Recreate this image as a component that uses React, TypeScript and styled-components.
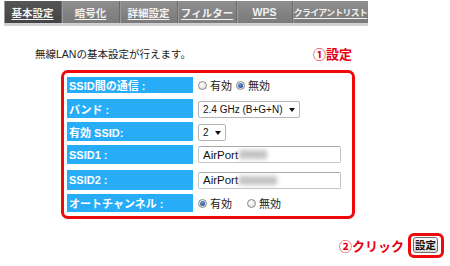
import React from "react";
import styled, { createGlobalStyle } from "styled-components";

const Global = createGlobalStyle`
  html, body { margin: 0; padding: 0; background: #fff; }
  body { font-family: "Liberation Sans", "Noto Sans CJK JP", sans-serif; }
`;

const Page = styled.div`
  width: 450px;
  height: 266px;
  overflow: hidden;
  background: #fff;
`;

const TabBar = styled.div`
  margin: 1px 0 0 4px;
  width: 364px;
  height: 22px;
  display: flex;
  border-bottom: 3px solid #d2d2d2;
  background: linear-gradient(#8e8e8e, #7a7a7a);
`;

const Tab = styled.div<{ $w: number; $active?: boolean; $fs?: number }>`
  width: ${(p) => p.$w}px;
  display: flex;
  align-items: center;
  justify-content: center;
  box-sizing: border-box;
  background: ${(p) => (p.$active ? "linear-gradient(#555, #444)" : "transparent")};
  border-right: 1px solid #6a6a6a;
  box-shadow: inset 1px 0 0 #9a9a9a;
  color: #f2f2f2;
  font-size: ${(p) => p.$fs ?? 10.5}px;
  letter-spacing: ${(p) => (p.$fs ? "-0.6px" : "0")};
  font-weight: bold;
  text-decoration: underline;
  text-underline-offset: 2px;
  white-space: nowrap;
  overflow: hidden;
  &:last-child { border-right: none; }
`;

const HeaderRow = styled.div`
  margin-top: 19px;
  height: 16px;
  display: flex;
  align-items: center;
  justify-content: space-between;
  padding: 0 98px 0 35px;
`;

const Intro = styled.div`
  font-size: 10.5px;
  color: #222;
`;

const RedNote = styled.div`
  font-size: 13px;
  font-weight: bold;
  color: #e60012;
  white-space: nowrap;
`;

const RedBox = styled.div`
  margin: 9px 0 0 61px;
  width: 294px;
  height: 149px;
  box-sizing: border-box;
  border: 3px solid #ee0a0a;
  border-radius: 7px;
  padding: 4px 0 0 3px;
`;

const Row = styled.div<{ $h: number; $gap: number }>`
  display: grid;
  grid-template-columns: 126px 1fr;
  column-gap: 5px;
  height: ${(p) => p.$h}px;
  margin-bottom: ${(p) => p.$gap}px;
  align-items: center;
`;

const Label = styled.div`
  height: 100%;
  background: #27acf7;
  color: #fff;
  font-size: 11px;
  font-weight: bold;
  display: flex;
  align-items: center;
  padding-left: 2px;
  white-space: nowrap;
`;

const Value = styled.div`
  display: flex;
  align-items: center;
  font-size: 11px;
  color: #222;
  white-space: nowrap;
`;

const Radio = styled.span<{ $checked?: boolean }>`
  position: relative;
  display: inline-block;
  flex: none;
  width: 9px;
  height: 9px;
  box-sizing: border-box;
  border-radius: 50%;
  border: 1px solid #8a8a8a;
  background: radial-gradient(circle at 40% 35%, #ffffff, #d6d6d6);
  margin-right: 3px;
  &::after {
    content: "";
    display: ${(p) => (p.$checked ? "block" : "none")};
    position: absolute;
    inset: 1px;
    border-radius: 50%;
    background: radial-gradient(circle at 40% 35%, #6f9be0, #12357a);
  }
`;

const RadioLabel = styled.span<{ $gap: number }>`
  margin-right: ${(p) => p.$gap}px;
`;

const Select = styled.div<{ $w: number }>`
  width: ${(p) => p.$w}px;
  height: 17px;
  box-sizing: border-box;
  border: 1px solid #b5b5b5;
  border-radius: 2px;
  background: #fff;
  display: flex;
  align-items: center;
  justify-content: space-between;
  padding: 0 4px 0 4px;
  font-size: 10px;
  color: #111;
  white-space: nowrap;
  margin-top: 2px;
`;

const Arrow = styled.span`
  flex: none;
  width: 0;
  height: 0;
  border-left: 3.5px solid transparent;
  border-right: 3.5px solid transparent;
  border-top: 4px solid #111;
`;

const Input = styled.div`
  width: 143px;
  height: 17px;
  box-sizing: border-box;
  border: 1px solid #c4c4c4;
  border-top-color: #a8a8a8;
  border-radius: 2px;
  background: #fff;
  display: flex;
  align-items: center;
  padding-left: 4px;
  font-size: 11.5px;
  color: #111;
`;

const Blurred = styled.span<{ $w: number }>`
  display: inline-block;
  width: ${(p) => p.$w}px;
  height: 9px;
  margin-left: 1px;
  background: #c4c4c4;
  filter: blur(2px);
`;

const Footer = styled.div`
  margin-top: 14px;
  display: flex;
  justify-content: flex-end;
  align-items: center;
  padding-right: 6px;
  gap: 4px;
`;

const ButtonFrame = styled.div`
  border: 3px solid #ee0a0a;
  border-radius: 6px;
  padding: 1px 3px 2px 2px;
  display: flex;
`;

const Button = styled.button`
  width: 25px;
  height: 16px;
  padding: 0;
  border: 1px solid #6e6e6e;
  border-radius: 3px;
  background: linear-gradient(#f8f8f8, #dadada);
  font-family: "Noto Sans CJK JP", sans-serif;
  font-size: 10.5px;
  font-weight: bold;
  color: #111;
  line-height: 14px;
`;

const tabs: { t: string; w: number; active?: boolean; fs?: number }[] = [
  { t: "基本設定", w: 58, active: true },
  { t: "暗号化", w: 58 },
  { t: "詳細設定", w: 58 },
  { t: "フィルター", w: 59 },
  { t: "WPS", w: 56 },
  { t: "クライアントリスト", w: 75, fs: 8.8 },
];

export default function App() {
  return (
    <Page>
      <Global />
      <TabBar>
        {tabs.map((t) => (
          <Tab key={t.t} $w={t.w} $active={t.active} $fs={t.fs}>
            {t.t}
          </Tab>
        ))}
      </TabBar>
      <HeaderRow>
        <Intro>無線LANの基本設定が行えます。</Intro>
        <RedNote>①設定</RedNote>
      </HeaderRow>
      <RedBox>
        <Row $h={14} $gap={8}>
          <Label>SSID間の通信 :</Label>
          <Value>
            <Radio />
            <RadioLabel $gap={4}>有効</RadioLabel>
            <Radio $checked />
            <RadioLabel $gap={0}>無効</RadioLabel>
          </Value>
        </Row>
        <Row $h={15} $gap={8}>
          <Label>バンド :</Label>
          <Value>
            <Select $w={102}>
              2.4 GHz (B+G+N)
              <Arrow />
            </Select>
          </Value>
        </Row>
        <Row $h={17} $gap={6}>
          <Label>有効 SSID:</Label>
          <Value>
            <Select $w={28}>
              2
              <Arrow />
            </Select>
          </Value>
        </Row>
        <Row $h={19} $gap={6}>
          <Label>SSID1 :</Label>
          <Value>
            <Input>
              AirPort
              <Blurred $w={28} />
            </Input>
          </Value>
        </Row>
        <Row $h={20} $gap={4}>
          <Label>SSID2 :</Label>
          <Value>
            <Input>
              AirPort
              <Blurred $w={38} />
            </Input>
          </Value>
        </Row>
        <Row $h={18} $gap={0}>
          <Label>オートチャンネル :</Label>
          <Value>
            <Radio $checked />
            <RadioLabel $gap={15}>有効</RadioLabel>
            <Radio />
            <RadioLabel $gap={0}>無効</RadioLabel>
          </Value>
        </Row>
      </RedBox>
      <Footer>
        <RedNote>②クリック</RedNote>
        <ButtonFrame>
          <Button>設定</Button>
        </ButtonFrame>
      </Footer>
    </Page>
  );
}
